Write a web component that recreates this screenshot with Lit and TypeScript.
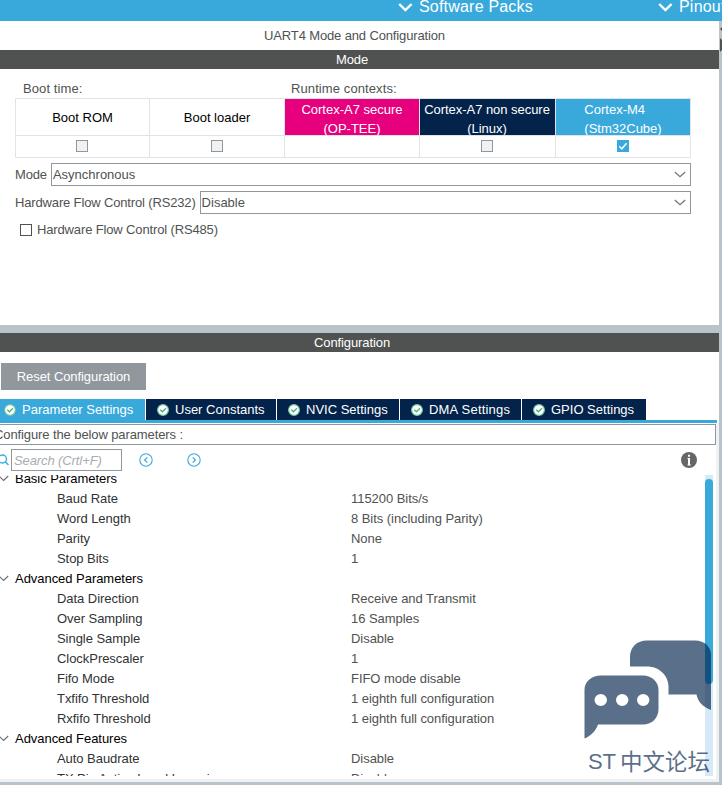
import { LitElement, html, css, svg, nothing } from "lit";
import { customElement, property, state } from "lit/decorators.js";
import { classMap } from "lit/directives/class-map.js";

interface Context {
  lines: string[];
  kind: string;
  check: "off" | "on" | "none";
}

interface Param {
  name: string;
  value: string;
}

interface Group {
  name: string;
  params: Param[];
}

const CONTEXTS: Context[] = [
  { lines: ["Boot ROM"], kind: "plain", check: "off" },
  { lines: ["Boot loader"], kind: "plain", check: "off" },
  { lines: ["Cortex-A7 secure", "(OP-TEE)"], kind: "pink", check: "none" },
  { lines: ["Cortex-A7 non secure", "(Linux)"], kind: "navy", check: "off" },
  { lines: ["Cortex-M4", "(Stm32Cube)"], kind: "blue", check: "on" },
];

const TABS = ["Parameter Settings", "User Constants", "NVIC Settings", "DMA Settings", "GPIO Settings"];

const GROUPS: Group[] = [
  {
    name: "Basic Parameters",
    params: [
      { name: "Baud Rate", value: "115200 Bits/s" },
      { name: "Word Length", value: "8 Bits (including Parity)" },
      { name: "Parity", value: "None" },
      { name: "Stop Bits", value: "1" },
    ],
  },
  {
    name: "Advanced Parameters",
    params: [
      { name: "Data Direction", value: "Receive and Transmit" },
      { name: "Over Sampling", value: "16 Samples" },
      { name: "Single Sample", value: "Disable" },
      { name: "ClockPrescaler", value: "1" },
      { name: "Fifo Mode", value: "FIFO mode disable" },
      { name: "Txfifo Threshold", value: "1 eighth full configuration" },
      { name: "Rxfifo Threshold", value: "1 eighth full configuration" },
    ],
  },
  {
    name: "Advanced Features",
    params: [
      { name: "Auto Baudrate", value: "Disable" },
      { name: "TX Pin Active Level Inversion", value: "Disable" },
    ],
  },
];

@customElement("uart-select")
export class UartSelect extends LitElement {
  @property() label = "";
  @property() value = "";

  static styles = css`
    :host {
      display: flex;
      align-items: center;
      height: 23px;
      color: #4f5251;
    }
    .label {
      flex: none;
      padding-right: 4px;
      letter-spacing: -0.15px;
    }
    .box {
      flex: 1;
      display: flex;
      align-items: center;
      justify-content: space-between;
      box-sizing: border-box;
      height: 23px;
      padding: 0 4px 0 1px;
      border: 1px solid #90989e;
    }
  `;

  render() {
    return html`
      <span class="label">${this.label}</span>
      <div class="box">
        <span>${this.value}</span>
        <svg width="12" height="7" viewBox="0 0 12 7" fill="none" stroke="#6f7274" stroke-width="1.2">
          <path d="M.8 1 6 5.600 11.200 1" />
        </svg>
      </div>
    `;
  }
}

@customElement("app-root")
export class AppRoot extends LitElement {
  @state() private activeTab = 0;

  static styles = css`
    :host {
      display: block;
      position: relative;
      width: 722px;
      height: 785px;
      overflow: hidden;
      background: #fff;
      color: #4f5251;
      font-family: "Liberation Sans", Arial, sans-serif;
      font-size: 13px;
      line-height: 20px;
      white-space: nowrap;
    }
    svg {
      display: block;
      flex: none;
    }
    .menu {
      display: flex;
      height: 21px;
      padding-left: 398px;
      background: #39a9dc;
      color: #fff;
      font-size: 16px;
      letter-spacing: 0.2px;
      line-height: 14px;
    }
    .menu-item {
      display: flex;
      flex: none;
      gap: 6px;
      width: 260px;
      height: 14px;
    }
    .menu-item svg {
      margin-top: 2px;
    }
    .body {
      display: flex;
      height: 764px;
      background: #b8c4ca;
    }
    .main {
      width: 719px;
      display: flex;
      flex-direction: column;
      gap: 8px;
    }
    .edge {
      padding-top: 5px;
      width: 3px;
      overflow: hidden;
    }
    .mode {
      height: 304px;
      background: #fff;
    }
    .title {
      height: 29px;
      padding-right: 10px;
      letter-spacing: -0.14px;
      line-height: 29px;
      text-align: center;
    }
    .bar {
      height: 19px;
      padding-right: 15px;
      background: #4f5251;
      color: #fff;
      letter-spacing: -0.1px;
      line-height: 19px;
      text-align: center;
    }
    .captions {
      display: flex;
      height: 19px;
      padding: 10px 0 0 23px;
      letter-spacing: 0.1px;
    }
    .captions span {
      width: 268px;
    }
    .contexts {
      display: grid;
      grid-template-columns: 133px 134px 134px 135px 134px;
      grid-template-rows: 36px 21px;
      gap: 1px;
      width: 674px;
      margin-left: 15px;
      padding: 1px;
      background: #e1e4e6;
    }
    .ctx {
      display: flex;
      align-items: center;
      justify-content: center;
      overflow: hidden;
      background: #fff;
      color: #000;
      line-height: 19px;
    }
    .ctx.pink,
    .ctx.navy,
    .ctx.blue {
      align-items: flex-start;
      padding-top: 1px;
      color: #fff;
      text-align: center;
    }
    .ctx.pink {
      background: #e6007e;
    }
    .ctx.navy {
      padding-right: 1px;
      background: #03234b;
      letter-spacing: -0.04px;
    }
    .ctx.blue {
      background: #39a9dc;
      text-align: left;
    }
    .cell {
      display: flex;
      align-items: center;
      justify-content: center;
      padding: 0 1px 1px 0;
      background: #fff;
    }
    .check {
      box-sizing: border-box;
      width: 12px;
      height: 12px;
      border: 1px solid #90989e;
      background: #eff1f3;
    }
    .check.on {
      border: 0;
      background: #39a9dc;
    }
    .check.open {
      border-color: #4f5251;
      background: #fff;
    }
    .fields {
      display: flex;
      flex-direction: column;
      gap: 5px;
      width: 676px;
      padding: 5px 0 0 15px;
    }
    .option {
      display: flex;
      align-items: center;
      gap: 5px;
      height: 22px;
      padding-left: 5px;
      letter-spacing: -0.14px;
    }
    .config {
      display: flex;
      flex-direction: column;
      height: 449px;
      background: #fff;
    }
    .reset {
      width: 145px;
      height: 27px;
      margin: 11px 0 9px 1px;
      padding: 0;
      border: 0;
      background: #90989e;
      color: #fff;
      font: inherit;
      letter-spacing: -0.08px;
    }
    .tabs {
      display: grid;
      grid-template-columns: 145px 130px 122px 121px 124px;
      gap: 1px;
      width: 717px;
      height: 21px;
      border-bottom: 3px solid #39a9dc;
    }
    .tab {
      display: flex;
      align-items: center;
      gap: 6px;
      padding-left: 11px;
      background: #03234b;
      color: #fff;
      cursor: pointer;
    }
    .tab:first-child {
      padding-left: 4px;
    }
    .tab:nth-child(4) {
      letter-spacing: 0.2px;
    }
    .tab.active {
      background: #39a9dc;
    }
    .pane {
      flex: 1;
      overflow: hidden;
      border: solid #eff1f3;
      border-width: 0 3px 3px 0;
    }
    .hint {
      box-sizing: border-box;
      width: 723px;
      height: 21px;
      margin: 1px 0 0 -7px;
      border: 1px solid #90989e;
      letter-spacing: -0.1px;
      line-height: 19px;
    }
    .tools {
      display: flex;
      align-items: center;
      height: 30px;
    }
    .search {
      box-sizing: border-box;
      width: 111px;
      height: 22px;
      margin: 0 17px 0 2px;
      padding: 0 1px 0 2px;
      border: 1px solid #90989e;
      color: #4f5251;
      font: italic 13px/20px "Liberation Sans", Arial, sans-serif;
      letter-spacing: -0.1px;
    }
    .search::placeholder {
      color: #a9adb0;
      opacity: 1;
    }
    .next {
      margin-left: 34px;
    }
    .info {
      margin: 0 19px 0 auto;
    }
    .list {
      display: flex;
      justify-content: space-between;
      height: 301px;
      padding-right: 3px;
    }
    .tree {
      flex: 1;
      overflow: hidden;
    }
    .rows {
      margin-top: -6px;
    }
    .group {
      display: flex;
      align-items: center;
      gap: 6px;
      height: 20px;
      color: #000;
      letter-spacing: -0.04px;
    }
    .group svg {
      margin-bottom: 1px;
    }
    .row {
      display: grid;
      grid-template-columns: 294px 1fr;
      height: 20px;
      padding-left: 57px;
      letter-spacing: -0.05px;
    }
    .name {
      color: #303334;
    }
    .track {
      width: 8px;
      padding-top: 4px;
      box-sizing: border-box;
      background: #d7e9f6;
    }
    .thumb {
      height: 205px;
      border-radius: 4px;
      background: #39a9dc;
    }
    /* forum mark floating over the lower right corner */
    .mark {
      position: absolute;
      left: 580px;
      top: 636px;
      opacity: 0.65;
    }
    .mark text {
      font-family: "Liberation Sans", "Noto Sans CJK SC", sans-serif;
    }
  `;

  private okIcon() {
    return html`<svg width="12" height="12" viewBox="0 0 12 12">
      <circle cx="6" cy="6" r="5.400" fill="#fff" stroke="#6cc49a" stroke-width="1.200" />
      <path d="M3.200 5.800 5.400 7.800 9 4.200" fill="none" stroke="#52ae80" stroke-width="1.300" />
    </svg>`;
  }

  private stepIcon(d: string, cls: string) {
    return html`<svg class=${cls} width="14" height="14" viewBox="0 0 14 14" fill="none" stroke="#39a9dc">
      <circle cx="7" cy="7" r="6.200" stroke-width="1.100" />
      <path d=${d} stroke-width="1.200" />
    </svg>`;
  }

  private menuItem(text: string) {
    return html`<div class="menu-item">
      <svg width="15" height="11" viewBox="0 0 15 11" fill="none" stroke="#fff" stroke-width="2.400">
        <path d="M1.200 2 7.400 8 13.600 2" />
      </svg>
      <span>${text}</span>
    </div>`;
  }

  private contextCheck(ctx: Context) {
    if (ctx.check === "none") return nothing;
    const on = ctx.check === "on";
    return html`<div class=${classMap({ check: true, on })}>
      ${on
        ? html`<svg width="12" height="12" viewBox="0 0 12 12" fill="none" stroke="#fff" stroke-width="1.500">
            <path d="M2.300 6.300 4.800 8.800 9.600 3.300" />
          </svg>`
        : nothing}
    </div>`;
  }

  private group(g: Group) {
    return html`
      <div class="group">
        <svg width="9" height="7" viewBox="0 0 9 7" fill="none" stroke="#6f7274" stroke-width="1.200">
          <path d="M-1 1 3.600 5.400 8.200 1" />
        </svg>
        <span>${g.name}</span>
      </div>
      ${g.params.map(
        (p) => html`<div class="row"><span class="name">${p.name}</span><span>${p.value}</span></div>`
      )}
    `;
  }

  private mark() {
    return html`<svg class="mark" width="136" height="142" viewBox="0 0 136 142" fill="#03234b">
      <path
        d="M50 30.500V21C50 11 57 4.500 67 4.500H115C125 4.500 131 11 131 19V74C123 71 118 66 116.500 58.500H88.500V50C88 39 79 30.500 67 30.500Z"
      />
      <path
        fill-rule="evenodd"
        d="M4.500 102.500V54C4.500 45 12 39.500 21 39.500H63C72 39.500 78.500 46 78.500 54V73C78.500 82 72 88.500 63 88.500H18C16 94.500 11 100 4.500 102.500Z
           M14.500 64A6.200 6 0 1 0 27 64A6.200 6 0 1 0 14.500 64Z
           M36 64A6.200 6 0 1 0 48.400 64A6.200 6 0 1 0 36 64Z
           M57 64A6.200 6 0 1 0 69.400 64A6.200 6 0 1 0 57 64Z"
      />
      ${svg`<text x="8" y="133" font-size="22" textLength="28">ST</text>
      <text x="40" y="133.500" font-size="22.500" textLength="90">中文论坛</text>`}
    </svg>`;
  }

  render() {
    return html`
      <div class="menu">${this.menuItem("Software Packs")}${this.menuItem("Pinout")}</div>
      <div class="body">
        <div class="main">
          <section class="mode">
            <div class="title">UART4 Mode and Configuration</div>
            <div class="bar">Mode</div>
            <div class="captions"><span>Boot time:</span><span>Runtime contexts:</span></div>
            <div class="contexts">
              ${CONTEXTS.map(
                (c) => html`<div class="ctx ${c.kind}">
                  <div>${c.lines.map((l) => html`<div>${l}</div>`)}</div>
                </div>`
              )}
              ${CONTEXTS.map((c) => html`<div class="cell">${this.contextCheck(c)}</div>`)}
            </div>
            <div class="fields">
              <uart-select label="Mode" value="Asynchronous"></uart-select>
              <uart-select label="Hardware Flow Control (RS232)" value="Disable"></uart-select>
              <div class="option"><div class="check open"></div>Hardware Flow Control (RS485)</div>
            </div>
          </section>
          <section class="config">
            <div class="bar">Configuration</div>
            <button class="reset">Reset Configuration</button>
            <div class="tabs">
              ${TABS.map(
                (t, i) => html`<div
                  class=${classMap({ tab: true, active: i === this.activeTab })}
                  @click=${() => (this.activeTab = i)}
                >
                  ${this.okIcon()}<span>${t}</span>
                </div>`
              )}
            </div>
            <div class="pane">
              <div class="hint">Configure the below parameters :</div>
              <div class="tools">
                <svg width="9" height="14" viewBox="0 0 9 14" fill="none" stroke="#39a9dc" stroke-width="1.400">
                  <circle cx="2.500" cy="6" r="4" />
                  <path d="M5.300 8.800 8.500 12" />
                </svg>
                <input class="search" placeholder="Search (Crtl+F)" />
                ${this.stepIcon("M8.300 4.300 5.600 7 8.300 9.700", "prev")}
                ${this.stepIcon("M5.700 4.300 8.400 7 5.700 9.700", "next")}
                <svg class="info" width="16" height="16" viewBox="0 0 16 16">
                  <circle cx="8" cy="8" r="8" fill="#666" />
                  <path d="M7 2.800h2v2H7zM6.500 6H9v6.500h.8v1H6.500v-1H7V7h-.5z" fill="#fff" />
                </svg>
              </div>
              <div class="list">
                <div class="tree"><div class="rows">${GROUPS.map((g) => this.group(g))}</div></div>
                <div class="track"><div class="thumb"></div></div>
              </div>
            </div>
          </section>
        </div>
        <div class="edge">
          <svg width="3" height="28" viewBox="0 0 3 28" fill="#4f5251">
            <path d="M3 1V5L1 3ZM1 12 3 14V24L1 26Z" />
          </svg>
        </div>
      </div>
      ${this.mark()}
    `;
  }
}
